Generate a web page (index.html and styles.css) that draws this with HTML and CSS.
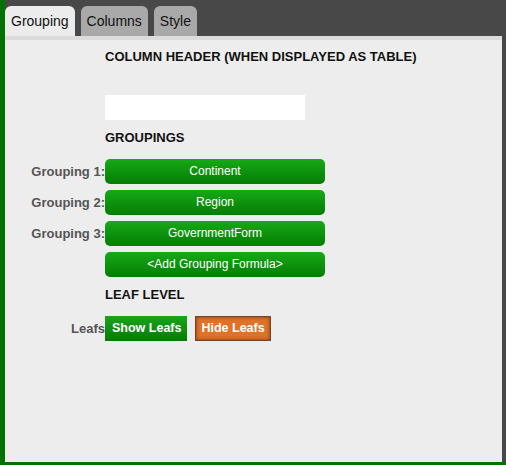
FILE: index.html
```html
<!DOCTYPE html>
<html>
<head>
<meta charset="utf-8">
<link rel="stylesheet" href="styles.css">
</head>
<body>
<div class="frame">
  <div class="tabs">
    <div class="tab active">Grouping</div>
    <div class="tab">Columns</div>
    <div class="tab">Style</div>
  </div>
  <div class="panel">
    <div class="form">
      <div class="label"></div>
      <div class="heading">COLUMN HEADER (WHEN DISPLAYED AS TABLE)</div>

      <div class="label"></div>
      <div class="field"><div class="input"></div></div>

      <div class="label"></div>
      <div class="heading h-groupings">GROUPINGS</div>

      <div class="label">Grouping 1:</div>
      <div class="field"><div class="gbtn">Continent</div></div>

      <div class="label">Grouping 2:</div>
      <div class="field"><div class="gbtn">Region</div></div>

      <div class="label">Grouping 3:</div>
      <div class="field"><div class="gbtn">GovernmentForm</div></div>

      <div class="label"></div>
      <div class="field"><div class="gbtn">&lt;Add Grouping Formula&gt;</div></div>

      <div class="label"></div>
      <div class="heading h-leaf">LEAF LEVEL</div>

      <div class="label">Leafs</div>
      <div class="field leafs">
        <div class="lbtn show">Show Leafs</div>
        <div class="lbtn hide">Hide Leafs</div>
      </div>
    </div>
  </div>
</div>
</body>
</html>
```

FILE: styles.css
```css
html, body {
  margin: 0;
  padding: 0;
}
body {
  width: 506px;
  height: 465px;
  font-family: "Liberation Sans", Arial, sans-serif;
  overflow: hidden;
}
.frame {
  box-sizing: border-box;
  width: 506px;
  height: 465px;
  border-left: 5px solid #037203;
  border-bottom: 3px solid #037203;
  background: #484848;
  display: flex;
  flex-direction: column;
}
.tabs {
  display: flex;
  gap: 6px;
  padding-top: 6px;
  height: 30px;
}
.tab {
  height: 30px;
  box-sizing: border-box;
  padding: 7px 6px 0 6px;
  font-size: 14px;
  color: #111;
  background: #a9a9a9;
  border-radius: 6px 6px 0 0;
}
.tab.active {
  background: #ececec;
}
.panel {
  flex: 1;
  margin-right: 4px;
  background: #ededed;
  border-top: 4px solid #dcdcdc;
}
.form {
  display: grid;
  grid-template-columns: 100px 1fr;
  align-items: center;
  row-gap: 6px;
  padding-top: 7px;
}
.label {
  text-align: right;
  font-size: 13px;
  font-weight: bold;
  color: #555;
  white-space: nowrap;
}
.heading {
  font-size: 13px;
  font-weight: bold;
  color: #111;
  height: 20px;
  line-height: 20px;
}
.field {
  display: flex;
}
.input {
  width: 200px;
  height: 25px;
  background: #fff;
  margin-top: 22px;
}
.h-groupings {
  margin-top: 2px;
  margin-bottom: 5px;
}
.gbtn {
  width: 220px;
  height: 25px;
  line-height: 25px;
  border-radius: 5px;
  background: linear-gradient(#17a917, #047d04);
  color: #fff;
  font-size: 12px;
  text-align: center;
}
.h-leaf {
  margin-top: 2px;
  margin-bottom: 5px;
}
.leafs {
  gap: 8px;
}
.lbtn {
  height: 25px;
  line-height: 25px;
  box-sizing: border-box;
  font-size: 12.5px;
  font-weight: bold;
  color: #fff;
  padding: 0 6px;
}
.lbtn.show {
  background: linear-gradient(#1aa41a, #047b04);
  padding: 0 6px 0 7px;
}
.lbtn.hide {
  background: #df7228;
  box-shadow: inset 0 0 0 1px #7a4420, inset 0 0 3px 2px #9a5020;
  padding: 0 6px;
}
```
